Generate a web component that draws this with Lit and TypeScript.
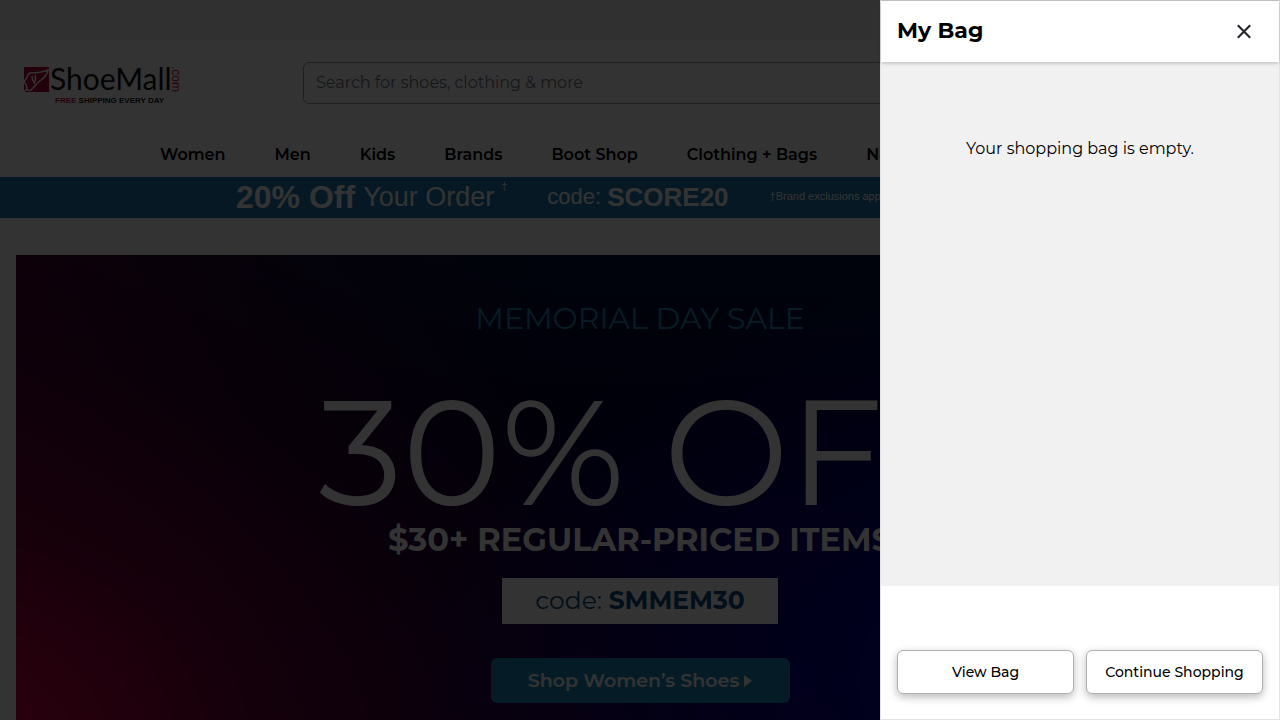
import { LitElement, html, css } from "lit";
import { customElement, state } from "lit/decorators.js";

const NAV_ITEMS = ["Women", "Men", "Kids", "Brands", "Boot Shop", "Clothing + Bags", "New"];

@customElement("shop-logo")
class ShopLogo extends LitElement {
  static styles = css`
    :host { display: block; }
    .logo { display: block; color: #111; text-decoration: none; }
    .row { display: flex; height: 33px; align-items: flex-end; }
    .mark { width: 25px; height: 25px; margin: 0 1px 3px 0; flex: none; }
    .name { font: 400 30px/33px Lato, sans-serif; height: 33px; }
    .com { writing-mode: vertical-rl; font: 400 12px/8px "Liberation Sans", sans-serif; color: #c40d42; height: 29px; }
    .tag { font: 700 8px/12px "Liberation Sans", sans-serif; padding-left: 31px; margin: 0; height: 12px; }
    .free { color: #c40d42; }
  `;
  render() {
    return html`<a class="logo" href="#home" aria-label="ShoeMall home">
      <div class="row">
        <svg class="mark" viewBox="0 0 25 25" aria-hidden="true">
          <rect width="25" height="25" fill="#b00838" />
          <path d="M0 15 C3 12 3 7 6 6 C11 6 17 6 24 3 C23 8 20 11 17 13 C13 16 11 19 8 22 C7 24 4 24 3 22 C3 19 2 17 0 15 M8 9 C8 11 8 13 10 15 M11 8 C12 11 12 13 10 17 M0 25 L3 22" fill="none" stroke="#fff" stroke-width="1.5" />
        </svg>
        <span class="name">ShoeMall</span><span class="com">.com</span>
      </div>
      <p class="tag"><span class="free">FREE</span> SHIPPING EVERY DAY</p>
    </a>`;
  }
}

@customElement("bag-drawer")
class BagDrawer extends LitElement {
  static styles = css`
    :host {
      position: fixed; top: 0; right: 0; bottom: 0; width: 400px; max-width: 100%;
      box-sizing: border-box; display: flex; flex-direction: column;
      background: #fff; border: 1px solid #e4e4e6; border-top-color: #c8c8ce; color: #000;
      font-family: Montserrat, Inter, sans-serif;
    }
    .head {
      display: flex; align-items: center; justify-content: space-between;
      padding: 0 24px 0 16px; height: 61px; flex: none; z-index: 1;
      box-shadow: 0 1px 4px rgba(0, 0, 0, 0.25);
    }
    .title { margin: 0; padding-bottom: 2px; font-size: 22px; line-height: 28px; font-weight: 700; }
    .close { border: 0; background: none; padding: 0; width: 22px; height: 22px; }
    .close svg { display: block; }
    .body { flex: 1; background: #f1f1f1; padding-top: 73px; text-align: center; }
    .empty { margin: 0; font-size: 16px; line-height: 28px; }
    .foot { display: flex; gap: 12px; padding: 64px 16px 25px; }
    .action {
      flex: 1; height: 44px; padding: 0; border: 1px solid #b0b0b0; border-radius: 6px; background: #fff;
      box-shadow: 0 3px 8px rgba(0, 0, 0, 0.28);
      font: 500 14px/20px Montserrat, Inter, sans-serif; color: #000;
    }
  `;
  private close() {
    this.dispatchEvent(new CustomEvent("close-bag"));
  }
  render() {
    return html`
      <div class="head">
        <h2 class="title">My Bag</h2>
        <button class="close" aria-label="Close bag" @click=${this.close}>
          <svg width="22" height="22" viewBox="0 0 22 22" aria-hidden="true">
            <path d="M4.8 4.3 L17.2 16.7 M17.2 4.3 L4.8 16.7" stroke="#212529" stroke-width="2.1" />
          </svg>
        </button>
      </div>
      <div class="body"><p class="empty">Your shopping bag is empty.</p></div>
      <div class="foot">
        <button class="action">View Bag</button>
        <button class="action" @click=${this.close}>Continue Shopping</button>
      </div>`;
  }
}

@customElement("app-root")
class AppRoot extends LitElement {
  @state() private bagOpen = true;

  static styles = css`
    :host {
      display: flex; flex-direction: column; height: 100vh; overflow: hidden;
      background: #fff; color: #000; font-family: Montserrat, Inter, sans-serif;
    }
    .strip { height: 40px; flex: none; background: #f1f1f1; }
    .header { display: grid; grid-template-columns: 280px 1fr; padding: 22px 160px 0 23px; }
    .logo { padding-left: 1px; }
    .search {
      box-sizing: border-box; width: 100%; height: 42px; padding: 0 12px 2px; border: 1px solid #999;
      border-radius: 6px; background: #fff; font: 400 16px/24px Montserrat, Inter, sans-serif;
    }
    .search::placeholder { color: #6c757d; opacity: 1; }
    .nav { display: flex; gap: 49px; padding: 36px 160px 11px; white-space: nowrap; }
    .nav-link { color: #000; text-decoration: none; font-size: 16px; line-height: 23px; font-weight: 600; }
    .promo {
      display: flex; align-items: center; height: 41px; flex: none; padding-left: 236px;
      background: #1f78b4; color: #fff; font-family: "Liberation Sans", sans-serif; white-space: nowrap;
    }
    .promo-off { font-size: 32px; font-weight: 700; margin-right: 8px; }
    .promo-order { font-size: 27px; }
    .promo-dagger { font-size: 11px; align-self: flex-start; margin: 3px 40px 0 7px; }
    .promo-code { font-size: 22px; margin-right: 6px; padding-bottom: 2px; }
    .promo-value { font-size: 26px; font-weight: 700; margin-right: 41px; }
    .promo-note { font-size: 11px; padding-bottom: 4px; }
    .hero {
      flex: 1; margin: 37px 16px 0; display: flex; flex-direction: column; align-items: center;
      color: #fff; white-space: nowrap;
      background:
        radial-gradient(ellipse 60% 120% at -5% 105%, #e60046 0%, rgba(150, 0, 60, 0.55) 40%, rgba(90, 0, 60, 0.25) 70%, rgba(60, 0, 50, 0) 100%),
        radial-gradient(ellipse 60% 90% at 90% 90%, #0000d8 0%, rgba(0, 0, 170, 0.7) 40%, rgba(0, 0, 50, 0) 100%),
        linear-gradient(90deg, rgba(80, 0, 45, 0.8) 0%, rgba(50, 0, 40, 0.5) 20%, rgba(20, 0, 40, 0) 45%),
        linear-gradient(180deg, #00143c 0%, #00002d 35%, #1e0041 100%);
    }
    .sale { margin: 46px 0 0; font-size: 30px; line-height: 36px; font-weight: 400; color: #2288b4; }
    .percent { margin: 44px 0 0; padding-left: 16px; font-size: 149px; line-height: 142px; font-weight: 400; }
    .items { margin: 0; font-size: 32px; line-height: 34px; font-weight: 700; }
    .coupon {
      margin: 21px 0 34px; width: 276px; height: 46px; line-height: 44px; background: #fff; text-align: center;
      font-size: 25px; font-weight: 400; color: #0a4a80;
    }
    .coupon-value { font-weight: 700; }
    .shop {
      display: flex; align-items: center; justify-content: center; gap: 5px; flex: none;
      width: 299px; height: 45px; border-radius: 6px; background: #1c8ac0; color: #fff;
      text-decoration: none; font-size: 19px; font-weight: 600;
    }
    .backdrop { position: fixed; inset: 0; background: rgba(0, 0, 0, 0.8); }
  `;

  render() {
    return html`
      <div class="strip"></div>
      <header class="header">
        <shop-logo class="logo"></shop-logo>
        <input class="search" type="search" aria-label="Search" placeholder="Search for shoes, clothing &amp; more" />
      </header>
      <nav class="nav" aria-label="Departments">
        ${NAV_ITEMS.map((item) => html`<a class="nav-link" href="#departments">${item}</a>`)}
      </nav>
      <section class="promo">
        <span class="promo-off">20% Off</span>
        <span class="promo-order">Your Order</span>
        <span class="promo-dagger">†</span>
        <span class="promo-code">code:</span>
        <span class="promo-value">SCORE20</span>
        <span class="promo-note">†Brand exclusions apply</span>
      </section>
      <main class="hero">
        <p class="sale">MEMORIAL DAY SALE</p>
        <h1 class="percent">30% OFF</h1>
        <p class="items">$30+ REGULAR-PRICED ITEMS</p>
        <div class="coupon">code: <span class="coupon-value">SMMEM30</span></div>
        <a class="shop" href="#women">Shop Women’s Shoes
          <svg width="8" height="12" viewBox="0 0 8 12" aria-hidden="true"><path d="M0 0 L8 6 L0 12Z" fill="#fff" /></svg>
        </a>
      </main>
      ${this.bagOpen
        ? html`<div class="backdrop"></div>
            <bag-drawer role="dialog" aria-label="My Bag" @close-bag=${() => (this.bagOpen = false)}></bag-drawer>`
        : null}
    `;
  }
}
